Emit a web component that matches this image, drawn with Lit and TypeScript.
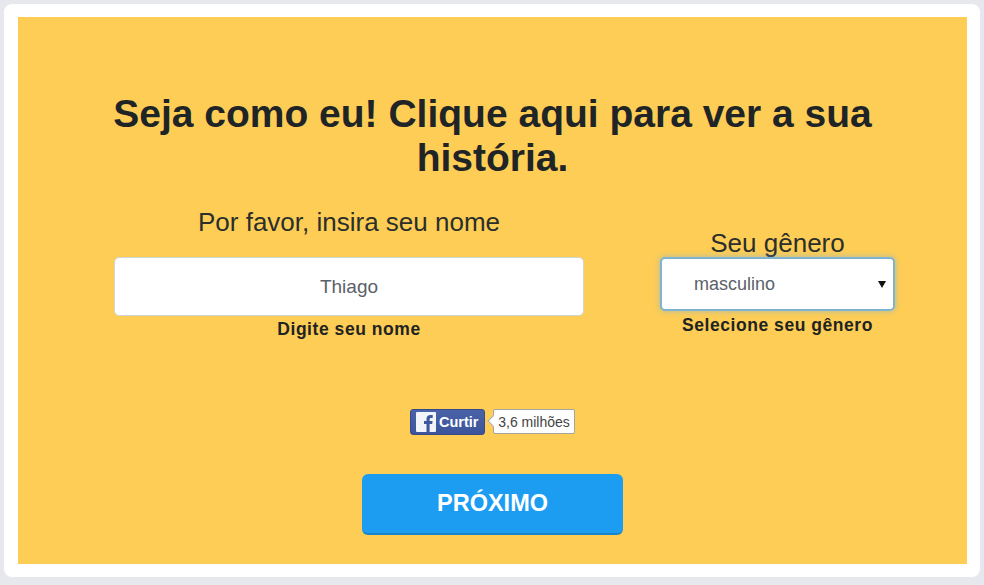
import { LitElement, html, css } from "lit";
import { customElement } from "lit/decorators.js";

@customElement("app-root")
export class AppRoot extends LitElement {
  static styles = css`
    :host {
      display: block;
      width: 984px;
      height: 585px;
      box-sizing: border-box;
      padding: 4px;
      background: #e6e8ed;
      font-family: "Liberation Sans", Arial, sans-serif;
      color: #22282a;
      overflow: hidden;
    }
    .card {
      box-sizing: border-box;
      height: 573px;
      width: 976px;
      padding: 13px 13px 13px 14px;
      background: #fff;
      border-radius: 8px;
    }
    .panel {
      box-sizing: border-box;
      height: 547px;
      padding-top: 75px;
      background: #fecd55;
      display: flex;
      flex-direction: column;
      align-items: center;
    }
    h1 {
      margin: 0;
      width: 800px;
      font-size: 39px;
      line-height: 44px;
      font-weight: 700;
      text-align: center;
      color: #1f2526;
    }
    .form {
      margin: 27px 0 0 24px;
      width: 781px;
      display: flex;
      align-items: flex-start;
      gap: 76px;
    }
    .col { display: flex; flex-direction: column; }
    .col.left { width: 470px; }
    .col.right { width: 235px; margin-top: 21px; }
    .lab {
      text-align: center;
      color: #2a2f2c;
      font-size: 26px;
      line-height: 30px;
      white-space: nowrap;
    }
    .left .lab { margin-bottom: 20px; }
    .right .lab { margin-bottom: -1px; }
    .control {
      box-sizing: border-box;
      background: #fff;
      color: #5b6168;
      display: flex;
      align-items: center;
      border-radius: 5px;
    }
    .input {
      height: 59px;
      justify-content: center;
      font-size: 19px;
      border: 1px solid #cfd4d6;
    }
    .select {
      height: 54px;
      padding: 0 7px 0 32px;
      justify-content: space-between;
      border: 2px solid #7fb3cf;
      box-shadow: 0 0 6px rgba(102, 175, 233, 0.55);
      font-size: 18px;
    }
    .caret {
      width: 0;
      height: 0;
      border-left: 4px solid transparent;
      border-right: 4px solid transparent;
      border-top: 7px solid #111;
    }
    .hint {
      margin-top: 3px;
      text-align: center;
      font-size: 17.5px;
      line-height: 20px;
      font-weight: 700;
      letter-spacing: 0.55px;
      color: #1f2322;
      white-space: nowrap;
    }
    .right .hint { margin-top: 4px; }
    .social {
      margin-top: 69px;
      display: flex;
      align-items: center;
      height: 27px;
    }
    .like {
      box-sizing: border-box;
      width: 75px;
      height: 26px;
      background: linear-gradient(#4a63a8, #3c5499);
      border: 1px solid #36498a;
      border-radius: 3px;
      display: flex;
      align-items: center;
      padding-left: 5px;
      gap: 3px;
      color: #fff;
      font-size: 14.5px;
      font-weight: 700;
    }
    .like svg { display: block; }
    .count {
      position: relative;
      box-sizing: border-box;
      margin-left: 8px;
      width: 82px;
      height: 25px;
      background: #fff;
      border: 1px solid #a5a5a0;
      border-radius: 2px;
      color: #444;
      font-size: 14px;
      display: flex;
      align-items: center;
      justify-content: center;
    }
    .count::before {
      content: "";
      position: absolute;
      left: -5px;
      top: 7px;
      width: 7px;
      height: 7px;
      background: #fff;
      border-left: 1px solid #a5a5a0;
      border-bottom: 1px solid #a5a5a0;
      transform: rotate(45deg);
    }
    .next {
      margin-top: 39px;
      box-sizing: border-box;
      width: 261px;
      height: 61px;
      border: 0;
      border-bottom: 2px solid #1a84c8;
      border-radius: 6px;
      background: #1c9df2;
      color: #fff;
      font-family: inherit;
      font-size: 23.5px;
      font-weight: 700;
    }
  `;

  render() {
    return html`
      <div class="card">
        <div class="panel">
          <h1>Seja como eu! Clique aqui para ver a sua história.</h1>
          <div class="form">
            <div class="col left">
              <div class="lab">Por favor, insira seu nome</div>
              <div class="control input">Thiago</div>
              <div class="hint">Digite seu nome</div>
            </div>
            <div class="col right">
              <div class="lab">Seu gênero</div>
              <div class="control select"><span>masculino</span><span class="caret"></span></div>
              <div class="hint">Selecione seu gênero</div>
            </div>
          </div>
          <div class="social">
            <div class="like">
              <svg width="20" height="20" viewBox="0 0 20 20">
                <rect width="20" height="20" rx="1" fill="#f2f4fa"></rect>
                <path d="M10.5 20v-8H8V9h2.500V7c0-2.800 1.500-4 4-4 1 0 1.800.1 2.200.1V6h-1.500c-1.300 0-1.600.6-1.600 1.500V9h3l-.4 3h-2.600v8z" fill="#3f579d"></path>
              </svg>
              <span>Curtir</span>
            </div>
            <div class="count">3,6 milhões</div>
          </div>
          <button class="next">PRÓXIMO</button>
        </div>
      </div>
    `;
  }
}
